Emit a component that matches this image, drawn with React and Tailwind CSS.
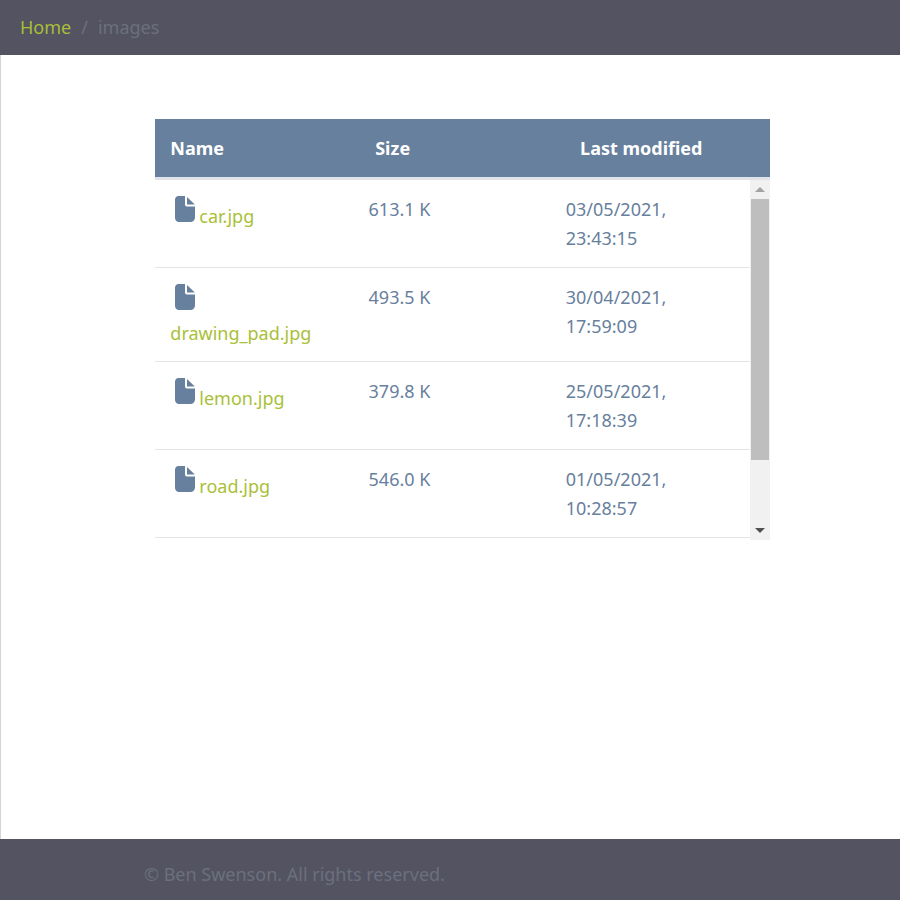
const files = [
  { name: "car.jpg", size: "613.1 K", date: "03/05/2021,", time: "23:43:15" },
  { name: "drawing_pad.jpg", size: "493.5 K", date: "30/04/2021,", time: "17:59:09", wrap: true },
  { name: "lemon.jpg", size: "379.8 K", date: "25/05/2021,", time: "17:18:39" },
  { name: "road.jpg", size: "546.0 K", date: "01/05/2021,", time: "10:28:57" },
];

function FileIcon() {
  return (
    <svg viewBox="0 0 20 26" className="w-5 h-[26px] inline-block shrink-0" fill="#67809d">
      <path d="M3.5 0H10V8.5C10 9.6 10.9 10.5 12 10.5H20V21.5C20 24 18 26 15.5 26H4C1.8 26 0 24.2 0 22V3.5C0 1.6 1.6 0 3.5 0Z" />
      <path d="M12 1L19.8 8.6H12Z" />
    </svg>
  );
}

function Row({ file }) {
  return (
    <div className={file.wrap ? "grid grid-cols-3 border-b border-[#e4e4e6] pt-[15px] pb-[13px]" : "grid grid-cols-3 border-b border-[#e4e4e6] pt-[15px] pb-[14px]"}>
      <div className="pl-[15px] pr-[15px]">
        {file.wrap ? (
          <div>
            <div className="pl-[4.5px] h-[36px] flex items-start pt-px"><FileIcon /></div>
            <a className="text-[#a9bf38] block leading-[29px]">{file.name}</a>
          </div>
        ) : (
          <div className="pl-[4.5px] flex items-start pt-px">
            <FileIcon />
            <a className="text-[#a9bf38] ml-[4.5px] mt-[6px] leading-[29px]">{file.name}</a>
          </div>
        )}
      </div>
      <div className="pl-[15px] leading-[29px]">{file.size}</div>
      <div className="pl-[14px] leading-[29px]">
        {file.date}
        <br />
        {file.time}
      </div>
    </div>
  );
}

function App() {
  return (
    <div className="min-h-screen flex flex-col bg-white border-l border-[#d4d4d6] text-[18px] text-[#67809d] font-['Noto_Sans','Open_Sans',sans-serif]">
      <nav className="h-[55px] -ml-px flex items-center pl-5 bg-[#535362] text-[#6b707d]">
        <a className="text-[#a9bf38]">Home</a>
        <span className="mx-[10px]">/</span>
        <span>images</span>
      </nav>

      <main className="flex-1 pt-16 pl-[154.33px]">
        <div className="w-[614.67px]">
          <div className="grid grid-cols-3 h-[61px] bg-[#67809d] border-b-[3px] border-[#dfe3ea] text-white font-bold">
            <div className="pl-[15px] pt-4">Name</div>
            <div className="pl-[15px] pt-4">Size</div>
            <div className="pl-[15px] pt-4">Last modified</div>
          </div>
          <div className="flex h-[360px]">
            <div className="flex-1">
              {files.map((file) => (
                <Row key={file.name} file={file} />
              ))}
            </div>
            <div className="w-5 bg-[#f1f1f1] flex flex-col items-center">
              <div className="h-[19px] flex items-center justify-center">
                <div className="border-x-[5px] border-x-transparent border-b-[5px] border-b-[#a3a3a3]" />
              </div>
              <div className="w-[18px] h-[261px] bg-[#bebebe]" />
              <div className="flex-1 flex items-end pb-[7px]">
                <div className="border-x-[5px] border-x-transparent border-t-[5px] border-t-[#505050]" />
              </div>
            </div>
          </div>
        </div>
      </main>

      <footer className="h-[61px] -ml-px flex items-center pl-[144px] pt-[10px] bg-[#535362] text-[#6b707d]">
        © Ben Swenson. All rights reserved.
      </footer>
    </div>
  );
}

export default App;
